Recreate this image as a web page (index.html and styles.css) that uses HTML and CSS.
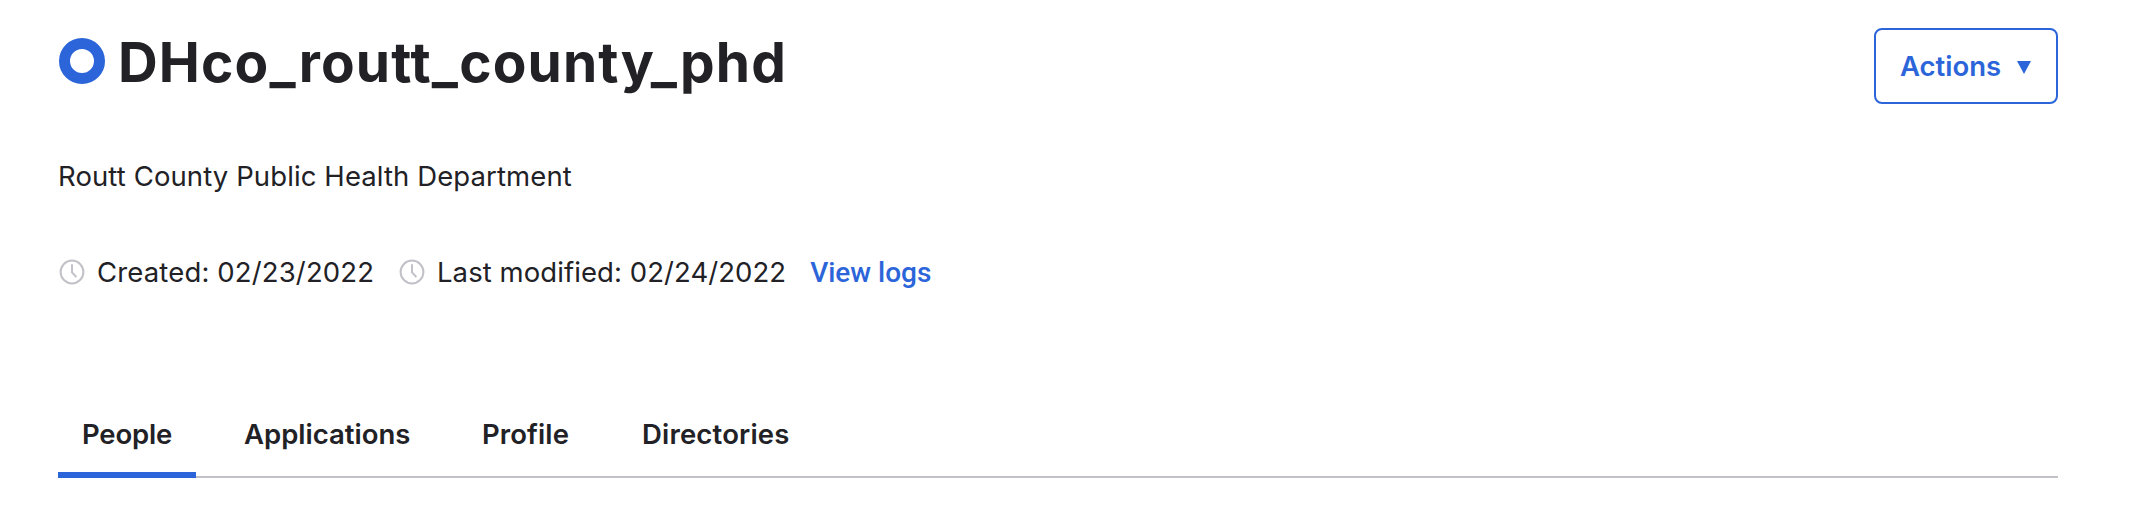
FILE: index.html
```html
<!DOCTYPE html>
<html lang="en">
<head>
<meta charset="utf-8">
<title>DHco_routt_county_phd</title>
<link rel="stylesheet" href="styles.css">
</head>
<body>
<main class="page">
  <header class="header">
    <div class="heading">
      <svg class="group-icon" viewBox="0 0 46 46" aria-hidden="true"><circle cx="23" cy="23" r="17.5" fill="none" stroke="currentColor" stroke-width="11"/></svg>
      <h1 class="title">DHco_routt_county_phd</h1>
    </div>
    <button class="actions" type="button">
      <span>Actions</span>
      <svg class="caret" viewBox="0 0 14 13" aria-hidden="true"><path d="M0 0H14L7 13Z" fill="currentColor"/></svg>
    </button>
  </header>
  <p class="description">Routt County Public Health Department</p>
  <div class="meta">
    <span class="meta-item">
      <svg class="clock" viewBox="0 0 26 26" aria-hidden="true"><circle cx="13" cy="13" r="11.4"/><path d="M13 5.2V13.4L17.4 18"/></svg>
      <span class="created">Created: 02/23/2022</span>
    </span>
    <span class="meta-item">
      <svg class="clock" viewBox="0 0 26 26" aria-hidden="true"><circle cx="13" cy="13" r="11.4"/><path d="M13 5.2V13.4L17.4 18"/></svg>
      <span class="modified">Last modified: 02/24/2022</span>
    </span>
    <a class="logs">View logs</a>
  </div>
  <nav class="tabs">
    <a class="tab tab-active tab-people">People</a>
    <a class="tab tab-applications">Applications</a>
    <a class="tab tab-profile">Profile</a>
    <a class="tab tab-directories">Directories</a>
  </nav>
</main>
</body>
</html>
```
FILE: styles.css
```css
* { box-sizing: border-box; }
body {
  margin: 0;
  background: #fff;
  color: #212126;
  font: 400 27.5px/36px Inter, "Liberation Sans", sans-serif;
  white-space: nowrap;
}
.page { padding: 28px 84px 0 58px; }
.header { display: flex; justify-content: space-between; height: 76px; }
.heading { display: flex; align-items: flex-start; gap: 13px; padding-left: 1px; }
.group-icon { width: 46px; height: 46px; margin-top: 10px; color: #2b65d9; }
.title {
  margin: 1px 0 0;
  font-size: 55px;
  line-height: 66px;
  font-weight: 700;
  letter-spacing: 1.15px;
}
.actions {
  display: flex;
  align-items: center;
  justify-content: space-between;
  width: 184px;
  height: 76px;
  padding: 0 25px 0 24px;
  border: 2px solid #2b65d9;
  border-radius: 8px;
  background: #fff;
  color: #2b65d9;
  font: inherit;
  font-weight: 600;
}
.caret { width: 14px; height: 13px; margin-top: 2px; }
.description { margin: 54px 0 60px; letter-spacing: 0.1px; }
.meta { display: flex; height: 36px; }
.meta-item { display: flex; align-items: center; gap: 12px; }
.meta-item + .meta-item { margin-left: 25px; }
.clock {
  width: 26px;
  height: 26px;
  margin-left: 1px;
  fill: none;
  stroke: #c1c1c8;
  stroke-width: 2;
}
.created { width: 276px; letter-spacing: 0.15px; }
.modified { letter-spacing: 0.07px; }
.logs {
  margin-left: 24px;
  padding-top: 1px;
  color: #2b65d9;
  font-family: Roboto, "Liberation Sans", sans-serif;
  font-size: 28px;
  font-weight: 500;
}
.tabs {
  display: flex;
  gap: 24px;
  height: 82px;
  margin-top: 106px;
  box-shadow: inset 0 -2px #c1c1c8;
}
.tab { padding: 20px 24px 0; font-weight: 600; }
.tab-active { border-bottom: 6px solid #2b65d9; }
.tab-people { width: 138px; letter-spacing: -0.2px; }
.tab-applications { width: 214px; }
.tab-profile { width: 136px; letter-spacing: 0.1px; }
.tab-directories { letter-spacing: 0.18px; }
```
